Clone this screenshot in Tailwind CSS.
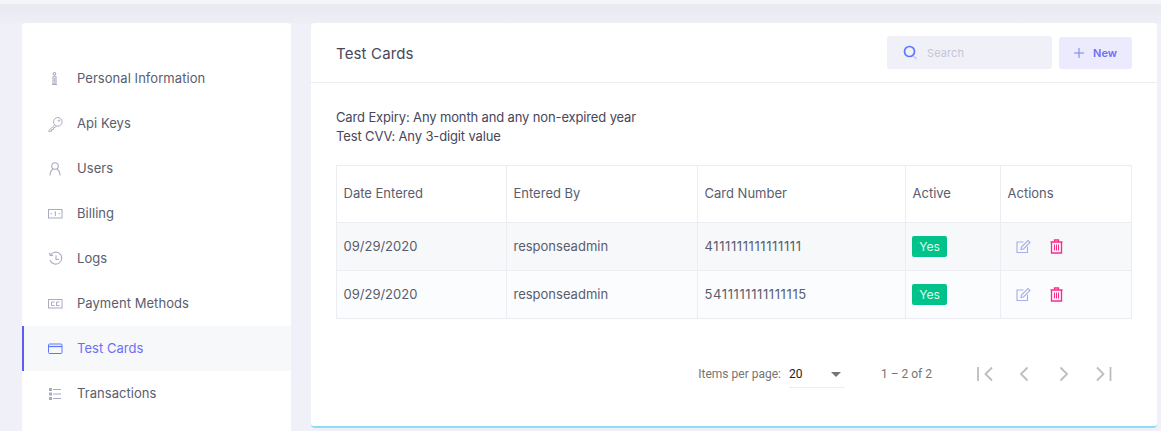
<!DOCTYPE html>
<html><head><meta charset="utf-8"><script src="https://cdn.jsdelivr.net/npm/@tailwindcss/browser@4"></script></head>
<body class="m-0 overflow-hidden">
<div class="w-[1161px] h-[431px] overflow-hidden bg-[#f0f1f8] font-['Inter',sans-serif] text-[13px] text-[#595d6e] flex flex-col">
<div class="h-[4px] shrink-0 bg-[#f4f4f9]"></div>
<div class="h-[19px] shrink-0 bg-linear-to-b from-[#e9eaf1] to-[#eeeff6]"></div>
<div class="flex pl-[22px] pr-[4px] gap-[20px] h-[408px]">
<aside class="w-[269px] shrink-0 h-[420px] bg-white rounded-t-[4px] pt-[33px] tracking-[0.05px]">
<a class="flex items-center h-[45px] pl-[26px]"><span class="w-[29px] flex"><svg width="16" height="16" viewBox="0 0 16 16" fill="none" stroke="#a9abc3" stroke-width="1.100"><circle cx="6.500" cy="2.800" r="1.300"/><path d="M5 5.800h3v6.500H5zM4 13.500h5.200"/><path d="M6.500 7v4" stroke-width=".8"/></svg></span>Personal Information</a>
<a class="flex items-center h-[45px] pl-[26px]"><span class="w-[29px] flex"><svg width="16" height="16" viewBox="0 0 16 16" fill="none" stroke="#a9abc3" stroke-width="1"><circle cx="9.800" cy="5.800" r="4.300"/><path d="M6.800 8.800 .8 14.500v.8h2.700l.2-1.700 1.700-.2.200-1.700 1.700-.3.900-1.200"/><circle cx="11" cy="4.600" r=".7"/></svg></span>Api Keys</a>
<a class="flex items-center h-[45px] pl-[26px]"><span class="w-[29px] flex"><svg width="16" height="16" viewBox="0 0 16 16" fill="none" stroke="#a9abc3" stroke-width="1.100"><circle cx="7" cy="5" r="3.300"/><path d="M2 14.500c0-3.500 1.700-5.500 3-6.200M12 14.500c0-3.500-1.700-5.500-3-6.200"/></svg></span>Users</a>
<a class="flex items-center h-[45px] pl-[26px]"><span class="w-[29px] flex"><svg width="16" height="16" viewBox="0 0 16 16" fill="none" stroke="#a9abc3" stroke-width="1"><rect x=".5" y="3.500" width="13.500" height="8.500"/><path d="M6.500 6.500l.9-.7v4.200M2.500 7.800h1.500M10.500 7.800H12"/></svg></span>Billing</a>
<a class="flex items-center h-[45px] pl-[26px]"><span class="w-[29px] flex"><svg width="16" height="16" viewBox="0 0 16 16" fill="none" stroke="#a9abc3" stroke-width="1.100"><path d="M2.300 4.500A6 6 0 1 1 2 9M1.500 1.800l.8 2.900 2.900-.5M8 4.500v4h3"/></svg></span>Logs</a>
<a class="flex items-center h-[45px] pl-[26px]"><span class="w-[29px] flex"><svg width="16" height="16" viewBox="0 0 16 16" fill="none" stroke="#a9abc3" stroke-width="1"><rect x=".5" y="3.500" width="13.500" height="8.500"/><path d="M6.500 6h-3v3.500h3M11.500 6h-3v3.500h3"/></svg></span>Payment Methods</a>
<a class="flex items-center h-[45px] pl-[24px] border-l-2 border-[#5d5fef] bg-[#f7f8fa]"><span class="w-[29px] flex"><svg width="16" height="16" viewBox="0 0 16 16" fill="none" stroke="#5d78ff" stroke-width="1"><rect x=".5" y="3" width="13.500" height="9.500" rx="1"/><path d="M.5 5.500h13.500" stroke-width="1.300"/></svg></span><span class="text-[#6c6ff5]">Test Cards</span></a>
<a class="flex items-center h-[45px] pl-[26px]"><span class="w-[29px] flex"><svg width="16" height="16" viewBox="0 0 16 16" fill="#a9abc3"><rect x="1" y="2" width="3" height="3"/><rect x="1" y="6.500" width="3" height="3"/><rect x="1" y="11" width="3" height="3"/><rect x="5" y="3" width="8" height="1"/><rect x="5" y="7.500" width="8" height="1"/><rect x="5" y="12" width="8" height="1"/></svg></span>Transactions</a>
</aside>
<main class="w-[846px] shrink-0 h-[405px] bg-white rounded-[4px] border-b-2 border-[#8fdcf5]">
<header class="h-[60px] border-b border-[#ebedf2] pl-[25px] pr-[25px] flex items-center justify-between">
<h3 class="text-[15px] font-normal text-[#48465b] pt-[3px] tracking-[0.15px]">Test Cards</h3>
<div class="flex items-center gap-[7px]">
<div class="w-[165px] h-[33px] rounded-[3px] bg-[#f0f1f8] flex items-center pl-[16px] gap-[10px]"><svg width="14" height="16" viewBox="0 0 14 16" fill="none"><circle cx="6.500" cy="6.500" r="5" stroke="#5d78ff" stroke-width="1.700"/><path d="m10.500 11 3 3" stroke="#c5cbf5" stroke-width="1.500"/></svg><span class="text-[11px] text-[#c4c5d6] pt-[2px] tracking-[0.1px]">Search</span></div>
<button class="w-[73px] h-[32px] rounded-[3px] bg-[#ebebfd] flex items-center justify-center gap-[9px] text-[11px] font-semibold text-[#6c6ff5]"><svg width="10" height="10" viewBox="0 0 10 10" stroke="#7c80e8" stroke-width="1"><path d="M5 0v10M0 5h10"/></svg><span class="pt-[1px]">New</span></button>
</div>
</header>
<section class="px-[25px] pt-[25px]">
<p class="text-[#48465b] leading-[19px] tracking-[-0.14px]">Card Expiry: Any month and any non-expired year<br>Test CVV: Any 3-digit value</p>
<table class="mt-[19px] w-[796px] table-fixed border-collapse border border-[#ebedf2]">
<colgroup><col class="w-[170px]"><col class="w-[191px]"><col class="w-[208px]"><col class="w-[95px]"><col></colgroup>
<thead><tr class="h-[57px]"><th class="font-normal text-left pl-[6.500px] border border-[#ebedf2]">Date Entered</th><th class="font-normal text-left pl-[6.500px] border border-[#ebedf2]">Entered By</th><th class="font-normal text-left pl-[6.500px] border border-[#ebedf2]">Card Number</th><th class="font-normal text-left pl-[6.500px] border border-[#ebedf2]">Active</th><th class="font-normal text-left pl-[6.500px] border border-[#ebedf2]">Actions</th></tr></thead>
<tbody>
<tr class="h-[48px] bg-[#f7f8fa]"><td class="pl-[6.500px] border border-[#ebedf2]">09/29/2020</td><td class="pl-[6.500px] border border-[#ebedf2]">responseadmin</td><td class="pl-[6.500px] border border-[#ebedf2] tracking-[0.6px]">4111111111111111</td><td class="pl-[6px] border border-[#ebedf2]"><span class="inline-flex w-[35px] h-[21px] items-center justify-center rounded-[2px] bg-[#00c389] text-white/90 text-[12px]">Yes</span></td><td class="pl-[6px] border border-[#ebedf2]"><div class="flex items-center gap-[19px] pl-[9px]"><svg width="15" height="15" viewBox="0 0 15 15" fill="none" stroke="#a7aeea" stroke-width="1.100"><path d="M11.500 8v5.500H1V3h6.500"/><path d="M5 10.500l.5-2.500 6.500-6.500 2 2-6.500 6.500z"/></svg><svg width="13" height="15" viewBox="0 0 13 15" fill="none" stroke="#fc2a86" stroke-width="1.300"><path d="M.5 3h12M1.500 3v11h10V3M4.500 3V1h4v2"/><path d="M4.500 5.500v6M6.500 5.500v6M8.500 5.500v6" stroke-width="1"/></svg></div></td></tr>
<tr class="h-[48px] bg-[#fbfcfe]"><td class="pl-[6.500px] border border-[#ebedf2]">09/29/2020</td><td class="pl-[6.500px] border border-[#ebedf2]">responseadmin</td><td class="pl-[6.500px] border border-[#ebedf2] tracking-[0.6px]">5411111111111115</td><td class="pl-[6px] border border-[#ebedf2]"><span class="inline-flex w-[35px] h-[21px] items-center justify-center rounded-[2px] bg-[#00c389] text-white/90 text-[12px]">Yes</span></td><td class="pl-[6px] border border-[#ebedf2]"><div class="flex items-center gap-[19px] pl-[9px]"><svg width="15" height="15" viewBox="0 0 15 15" fill="none" stroke="#a7aeea" stroke-width="1.100"><path d="M11.500 8v5.500H1V3h6.500"/><path d="M5 10.500l.5-2.500 6.500-6.500 2 2-6.500 6.500z"/></svg><svg width="13" height="15" viewBox="0 0 13 15" fill="none" stroke="#fc2a86" stroke-width="1.300"><path d="M.5 3h12M1.500 3v11h10V3M4.500 3V1h4v2"/><path d="M4.500 5.500v6M6.500 5.500v6M8.500 5.500v6" stroke-width="1"/></svg></div></td></tr>
</tbody></table>
<div class="flex items-center justify-end h-[56px] mt-[27px] font-['Roboto',sans-serif] text-[12px] text-[#757575] pr-[16px]">
<span>Items per page:</span>
<div class="ml-[8px] w-[56px] h-[27px] border-b border-[#ebedf2] flex items-center justify-between pr-[4px] text-[#222] text-[12px] -mb-[1px]"><span>20</span><span class="w-0 h-0 border-x-[5px] border-x-transparent border-t-[5px] border-t-[#757575]"></span></div>
<span class="ml-[36px] mr-[40px]">1 – 2 of 2</span>
<div class="flex gap-[16px]">
<svg width="24" height="24" viewBox="0 0 24 24" fill="none" stroke="#bdbdbd" stroke-width="1.800"><path d="M6 5v14M20 5.500l-6.500 6.500 6.500 6.500"/></svg>
<svg width="24" height="24" viewBox="0 0 24 24" fill="none" stroke="#bdbdbd" stroke-width="1.800"><path d="M15.500 5.500 9 12l6.500 6.500"/></svg>
<svg width="24" height="24" viewBox="0 0 24 24" fill="none" stroke="#bdbdbd" stroke-width="1.800"><path d="M8.500 5.500 15 12l-6.500 6.500"/></svg>
<svg width="24" height="24" viewBox="0 0 24 24" fill="none" stroke="#bdbdbd" stroke-width="1.800"><path d="M18.500 5v14M5 5.500l6.500 6.500L5 18.500"/></svg>
</div></div>
</section>
</main>
</div></div>
</body></html>
